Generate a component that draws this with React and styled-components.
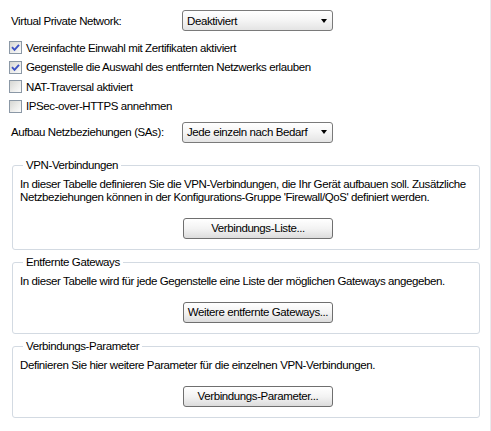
import React from "react";
import styled, { createGlobalStyle } from "styled-components";

const Global = createGlobalStyle`
  html, body { margin: 0; padding: 0; background: #fff; }
  body {
    font-family: "Liberation Sans", Arial, sans-serif;
    font-size: 11.5px;
    letter-spacing: -0.4px;
    color: #000;
  }
`;

const Page = styled.div`
  width: 491px;
  height: 431px;
  box-sizing: border-box;
  border-right: 1px solid #e9ebee;
  padding-top: 10px;
  display: flex;
  flex-direction: column;
`;

const SelectRow = styled.div`
  display: flex;
  align-items: center;
  height: 21px;
  padding-left: 11px;
  margin-top: ${(p) => p.$mt || 0}px;
`;

const Label = styled.span`
  width: 171px;
  flex: none;
`;

const Select = styled.div`
  width: 151px;
  height: 21px;
  box-sizing: border-box;
  border: 1px solid #7a7a7a;
  border-radius: 3px;
  background: linear-gradient(#ffffff 0%, #f6f6f6 45%, #e4e4e4 100%);
  display: flex;
  align-items: center;
  justify-content: space-between;
  padding: 0 5px 0 4px;
`;

const Arrow = styled.span`
  width: 0;
  height: 0;
  border-left: 3.5px solid transparent;
  border-right: 3.5px solid transparent;
  border-top: 4px solid #000;
`;

const Checks = styled.div`
  margin-top: 10px;
  padding-left: 9px;
  display: flex;
  flex-direction: column;
  gap: 6.5px;
`;

const CheckRow = styled.label`
  display: flex;
  align-items: center;
  gap: 4px;
  height: 13px;
`;

const Box = styled.span`
  width: 13px;
  height: 13px;
  box-sizing: border-box;
  flex: none;
  border: 1px solid #8b98a6;
  background: linear-gradient(135deg, #d6d6d2 0%, #ececea 55%, #fbfbfb 100%);
  display: flex;
  align-items: center;
  justify-content: center;
`;

const Groups = styled.div`
  margin: 16px 0 0 12px;
  width: 468px;
  display: flex;
  flex-direction: column;
  gap: 6px;
`;

const Group = styled.fieldset`
  margin: 0;
  min-width: 0;
  border: 1px solid #d3dae2;
  border-radius: 3px;
  padding: 6px 0 10px 7px;
`;

const Legend = styled.legend`
  margin-left: 3px;
  padding: 0 3px;
  line-height: 13px;
`;

const Desc = styled.p`
  margin: 0;
  line-height: 13px;
`;

const Button = styled.button`
  display: block;
  margin: 14px 0 0 163px;
  width: 150px;
  height: 21px;
  box-sizing: border-box;
  border: 1px solid #6f6f6f;
  border-radius: 3px;
  background: linear-gradient(#ffffff 0%, #f3f3f3 50%, #dcdcdc 100%);
  font: inherit;
  letter-spacing: inherit;
  color: #000;
  padding: 0;
`;

const Check = () => (
  <svg width="9" height="9" viewBox="0 0 9 9">
    <path d="M1 4.2 L3.5 6.8 L8 1.8" fill="none" stroke="#3d52c4" strokeWidth="1.9" />
  </svg>
);

const checks = [
  ["Vereinfachte Einwahl mit Zertifikaten aktiviert", true],
  ["Gegenstelle die Auswahl des entfernten Netzwerks erlauben", true],
  ["NAT-Traversal aktiviert", false],
  ["IPSec-over-HTTPS annehmen", false],
];

export default function App() {
  return (
    <Page>
      <Global />
      <SelectRow>
        <Label>Virtual Private Network:</Label>
        <Select>
          <span>Deaktiviert</span>
          <Arrow />
        </Select>
      </SelectRow>
      <Checks>
        {checks.map(([t, on]) => (
          <CheckRow key={t}>
            <Box>{on && <Check />}</Box>
            <span>{t}</span>
          </CheckRow>
        ))}
      </Checks>
      <SelectRow $mt={9}>
        <Label>Aufbau Netzbeziehungen (SAs):</Label>
        <Select>
          <span>Jede einzeln nach Bedarf</span>
          <Arrow />
        </Select>
      </SelectRow>
      <Groups>
        <Group>
          <Legend>VPN-Verbindungen</Legend>
          <Desc>
            In dieser Tabelle definieren Sie die VPN-Verbindungen, die Ihr Gerät aufbauen soll. Zusätzliche
            <br />
            Netzbeziehungen können in der Konfigurations-Gruppe 'Firewall/QoS' definiert werden.
          </Desc>
          <Button>Verbindungs-Liste...</Button>
        </Group>
        <Group>
          <Legend>Entfernte Gateways</Legend>
          <Desc>In dieser Tabelle wird für jede Gegenstelle eine Liste der möglichen Gateways angegeben.</Desc>
          <Button>Weitere entfernte Gateways...</Button>
        </Group>
        <Group>
          <Legend>Verbindungs-Parameter</Legend>
          <Desc>Definieren Sie hier weitere Parameter für die einzelnen VPN-Verbindungen.</Desc>
          <Button>Verbindungs-Parameter...</Button>
        </Group>
      </Groups>
    </Page>
  );
}
